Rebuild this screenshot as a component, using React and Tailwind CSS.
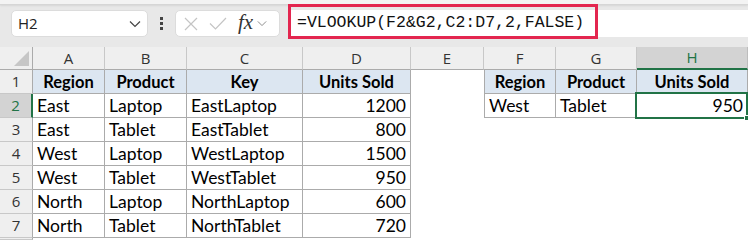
import React from 'react';

// Excel-like sheet with a VLOOKUP formula highlighted
const cols = ['A', 'B', 'C', 'D', 'E', 'F', 'G', 'H'];

const rows = [
  ['East', 'Laptop', 'EastLaptop', '1200'],
  ['East', 'Tablet', 'EastTablet', '800'],
  ['West', 'Laptop', 'WestLaptop', '1500'],
  ['West', 'Tablet', 'WestTablet', '950'],
  ['North', 'Laptop', 'NorthLaptop', '600'],
  ['North', 'Tablet', 'NorthTablet', '720'],
];

const cellFont = { fontFamily: 'Lato, "Open Sans", sans-serif' };

const Chevron = ({ className }) => (
  <svg className={className} viewBox="0 0 12 8" fill="none" stroke="#444" strokeWidth="1.2">
    <path d="M1 1.5l5 5 5-5" />
  </svg>
);

const Toolbar = () => (
  <div className="h-[47px] bg-[#e8e8e8] flex flex-col">
    <div className="h-[5px] bg-[#f3f3f3] border-b border-[#d6d6d6] shadow-[0_1px_2px_rgba(0,0,0,0.08)]" />
    <div className="flex items-center pt-[5px] h-[32px]">
      {/* name box */}
      <div className="ml-[11px] w-[137px] h-[27px] bg-white rounded-[5px] border border-[#dcdcdc] flex items-center pl-[6px] pr-[6px]">
        <span className="text-[15px] text-[#222] flex-1" style={{ fontFamily: '"Open Sans", sans-serif' }}>H2</span>
        <Chevron className="w-[12px] h-[8px]" />
      </div>
      {/* vertical dots */}
      <div className="w-[27px] flex flex-col items-center gap-[2px]">
        <div className="w-[3px] h-[3px] bg-[#444]" />
        <div className="w-[3px] h-[3px] bg-[#444]" />
        <div className="w-[3px] h-[3px] bg-[#444]" />
      </div>
      {/* cancel / enter / fx */}
      <div className="w-[105px] h-[27px] bg-white rounded-[5px] border border-[#dcdcdc] flex items-center pl-[8px] gap-[11px]">
        <svg className="w-[14px] h-[14px]" viewBox="0 0 14 14" stroke="#c4c4c4" strokeWidth="1.2">
          <path d="M1 1l12 12M13 1L1 13" />
        </svg>
        <svg className="w-[18px] h-[13px]" viewBox="0 0 18 13" fill="none" stroke="#c4c4c4" strokeWidth="1.2">
          <path d="M1 6.5l5.5 5.5L17 1" />
        </svg>
        <div className="flex items-center gap-[4px]">
          <span className="text-[21px] italic text-[#333] leading-none pb-[2px]" style={{ fontFamily: '"Liberation Serif", serif' }}>fx</span>
          <Chevron className="w-[10px] h-[7px] opacity-60" />
        </div>
      </div>
      {/* formula input */}
      <div className="relative ml-[8px] flex-1 h-[27px] bg-white rounded-l-[4px] flex items-center pl-[9px]">
        <span className="text-[16.5px] text-[#111] whitespace-nowrap" style={{ fontFamily: '"Liberation Mono", monospace' }}>
          =VLOOKUP(F2&amp;G2,C2:D7,2,FALSE)
        </span>
        <div className="absolute left-0 top-[-6px] w-[310px] h-[35px] border-[3px] border-[#e3264f]" />
      </div>
    </div>
  </div>
);

const ColHeader = ({ label, selected }) => (
  <div
    className={
      selected
        ? 'h-[23px] bg-[#d3d3d3] border-r border-[#bdbdbd] border-b-2 border-b-[#217346] text-[#217346] flex items-center justify-center text-[15px]'
        : 'h-[23px] bg-[#efefef] border-r border-[#c8c8c8] border-b border-b-[#ababab] text-[#333] flex items-center justify-center text-[15px]'
    }
    style={{ fontFamily: '"Open Sans", sans-serif' }}
  >
    {label}
  </div>
);

const RowHeader = ({ n, selected, short }) => (
  <div
    className={
      (short ? 'h-[2px] ' : 'h-[24px] ') +
      (selected
        ? 'bg-[#d3d3d3] border-r-2 border-r-[#217346] border-b border-b-[#c8c8c8] text-[#217346] flex items-center justify-center text-[15px]'
        : 'bg-[#efefef] border-r border-r-[#ababab] border-b border-b-[#c8c8c8] text-[#333] flex items-center justify-center text-[15px]')
    }
    style={{ fontFamily: '"Open Sans", sans-serif' }}
  >
    {n}
  </div>
);

const Cell = ({ children, head, right, bordered, leftBorder, fill }) => {
  let cls = 'h-[24px] flex items-end pb-[3px] px-[4px] text-black leading-none whitespace-nowrap';
  if (bordered) cls += ' border-r border-b border-[#ababab]';
  if (leftBorder) cls += ' border-l border-l-[#ababab]';
  if (head) cls += ' bg-[#dce6f1] font-bold justify-center text-[16.5px]';
  else cls += ' text-[17.5px]';
  if (right) cls += ' justify-end';
  if (fill) cls += ' relative';
  return (
    <div className={cls} style={cellFont}>
      {children}
      {fill && (
        <div className="absolute left-[-2px] top-[-2px] right-[-1px] bottom-[-2px] border-2 border-[#217346]">
          <div className="absolute right-[-4px] bottom-[-4px] w-[6px] h-[6px] bg-[#217346] border border-white" />
        </div>
      )}
    </div>
  );
};

const App = () => {
  return (
    <div className="w-[748px] h-[240px] overflow-hidden bg-white">
      <Toolbar />
      <div className="grid grid-cols-[33px_72px_82px_116px_108px_73px_72px_81px_111px]">
        {/* column headers */}
        <div className="h-[23px] bg-[#efefef] border-r border-b border-[#ababab] flex items-end justify-end pr-[3px] pb-[3px]">
          <svg className="w-[15px] h-[15px]" viewBox="0 0 15 15">
            <path d="M15 0V15H0Z" fill="#c6c6c6" />
          </svg>
        </div>
        {cols.map((c) => (
          <ColHeader key={c} label={c} selected={c === 'H'} />
        ))}

        {/* row 1: headers */}
        <RowHeader n={1} />
        <Cell head bordered>Region</Cell>
        <Cell head bordered>Product</Cell>
        <Cell head bordered>Key</Cell>
        <Cell head bordered>Units Sold</Cell>
        <Cell />
        <Cell head bordered leftBorder>Region</Cell>
        <Cell head bordered>Product</Cell>
        <Cell head bordered>Units Sold</Cell>

        {rows.map((r, i) => {
          const n = i + 2;
          return (
            <React.Fragment key={n}>
              <RowHeader n={n} selected={n === 2} />
              <Cell bordered>{r[0]}</Cell>
              <Cell bordered>{r[1]}</Cell>
              <Cell bordered>{r[2]}</Cell>
              <Cell bordered right>{r[3]}</Cell>
              <Cell />
              {n === 2 ? (
                <>
                  <Cell bordered leftBorder>West</Cell>
                  <Cell bordered>Tablet</Cell>
                  <Cell bordered right fill>950</Cell>
                </>
              ) : (
                <>
                  <Cell />
                  <Cell />
                  <Cell />
                </>
              )}
            </React.Fragment>
          );
        })}

        {/* row 8 peeking */}
        <RowHeader n="" short />
      </div>
    </div>
  );
};

export default App;
